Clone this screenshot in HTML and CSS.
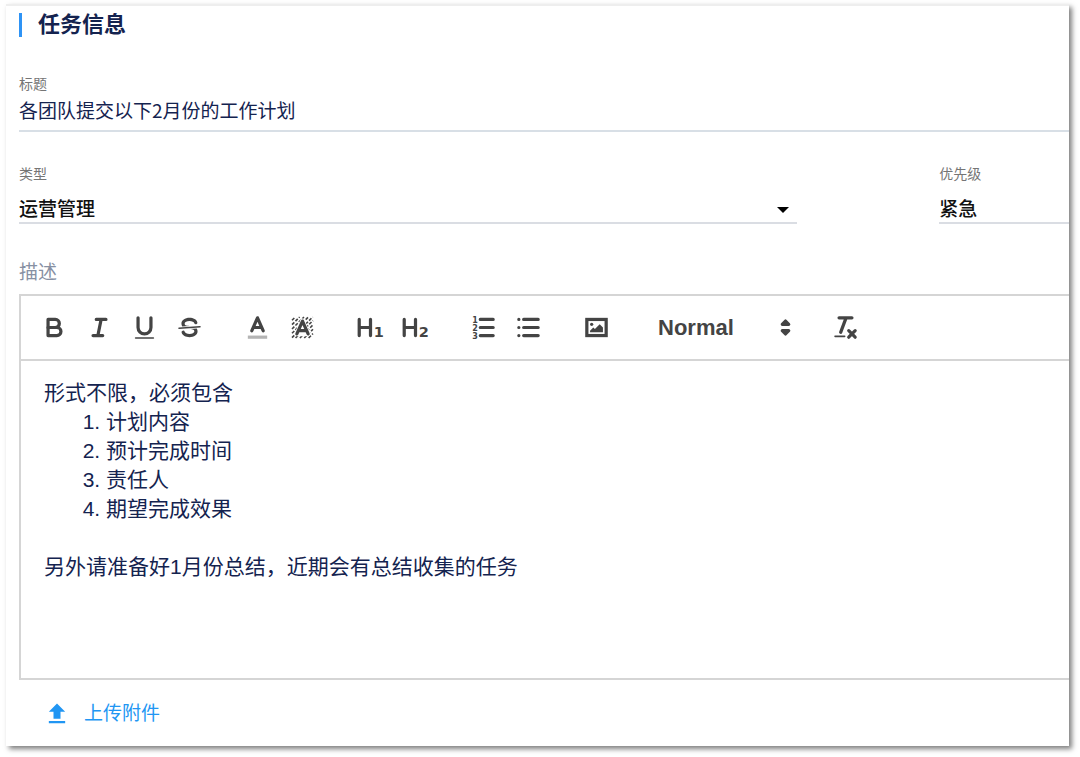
FILE: index.html
```html
<!DOCTYPE html>
<html lang="zh-CN">
<head>
<meta charset="utf-8">
<meta name="viewport" content="width=device-width, initial-scale=1">
<title>任务信息</title>
<link rel="stylesheet" href="styles.css">
</head>
<body>
<main class="card">
  <h2 class="card-title">任务信息</h2>

  <div class="field field-title">
    <label class="label" for="title">标题</label>
    <input class="text-input" id="title" type="text" value="各团队提交以下2月份的工作计划">
  </div>

  <div class="field-row">
    <div class="field">
      <label class="label" for="type">类型</label>
      <div class="select-wrap">
        <select class="select" id="type"><option>运营管理</option></select>
        <svg class="caret" viewBox="0 0 12 6" aria-hidden="true"><path d="M0 0h12L6 6z"/></svg>
      </div>
    </div>
    <div class="field">
      <label class="label" for="priority">优先级</label>
      <div class="select-wrap">
        <select class="select" id="priority"><option>紧急</option></select>
      </div>
    </div>
  </div>

  <h3 class="desc-label" id="desc-label">描述</h3>
  <section class="editor">
    <div class="toolbar" role="toolbar" aria-label="格式">
      <div class="group">
        <button class="tool" type="button" aria-label="粗体"><svg class="icon" viewBox="0 0 18 18"><path d="M5 4h4.500a2.500 2.500 0 0 1 0 5H5z"/><path d="M5 9h5.500a2.500 2.500 0 0 1 0 5H5z"/></svg></button>
        <button class="tool" type="button" aria-label="斜体"><svg class="icon" viewBox="0 0 18 18"><path d="M7 4h6M5 14h6M8 14l2-10"/></svg></button>
        <button class="tool" type="button" aria-label="下划线"><svg class="icon" viewBox="0 0 18 18"><path d="M5 3v6a4 4 0 0 0 8 0V3"/><rect class="solid" x="3" y="15" width="12" height="1" rx=".5"/></svg></button>
        <button class="tool" type="button" aria-label="删除线"><svg class="icon" viewBox="0 0 18 18"><path class="thin" d="M15.500 8.500l-13 1"/><path class="solid" d="M9.007 8C6.542 7.791 6 7.519 6 6.500 6 5.792 7.283 5 9 5c1.571 0 2.765.679 2.969 1.309a1 1 0 0 0 1.900-.617C13.356 4.106 11.354 3 9 3 6.200 3 4 4.538 4 6.500a3.200 3.200 0 0 0 .5 1.843zM8.984 10C11.457 10.208 12 10.479 12 11.500c0 .708-1.283 1.500-3 1.500-1.571 0-2.765-.679-2.969-1.309a1 1 0 1 0-1.900.617C4.644 13.894 6.646 15 9 15c2.800 0 5-1.538 5-3.500a3.200 3.200 0 0 0-.5-1.843z"/></svg></button>
      </div>
      <div class="group">
        <button class="tool" type="button" aria-label="文字颜色"><svg class="icon" viewBox="0 0 18 18"><path class="faded" d="M3 15h12"/><path d="M5.500 11L9 3l3.500 8M11.630 9H6.380"/></svg></button>
        <button class="tool" type="button" aria-label="背景颜色"><svg class="icon" viewBox="0 0 18 18"><path class="hatch" d="M2.500 4.500l2-2M2.500 7.200l4.700-4.700M2.500 9.900l7.400-7.400M2.500 12.600L12.600 2.500M2.500 15.300L15.300 2.500M4.700 15.500L15.500 4.700M7.400 15.500l8.100-8.100M10.100 15.500l5.400-5.400M12.800 15.500l2.700-2.700"/><path class="halo" d="M5.500 13L9 5l3.500 8z"/><path d="M5.500 13L9 5l3.500 8M11.630 11H6.380"/></svg></button>
      </div>
      <div class="group">
        <button class="tool" type="button" aria-label="一级标题"><svg class="icon" viewBox="0 0 18 18"><path d="M2 4v10M9 4v10M2 9h7"/><text class="digit" x="11" y="15">1</text></svg></button>
        <button class="tool" type="button" aria-label="二级标题"><svg class="icon" viewBox="0 0 18 18"><path d="M2 4v10M9 4v10M2 9h7"/><text class="digit" x="11" y="15">2</text></svg></button>
      </div>
      <div class="group">
        <button class="tool" type="button" aria-label="有序列表"><svg class="icon" viewBox="0 0 18 18"><path d="M7 4h8M7 9h8M7 14h8"/><text class="mini" x="2" y="6">1</text><text class="mini" x="2" y="11">2</text><text class="mini" x="2" y="16">3</text></svg></button>
        <button class="tool" type="button" aria-label="无序列表"><svg class="icon" viewBox="0 0 18 18"><path d="M6 4h9M6 9h9M6 14h9M3 4h.01M3 9h.01M3 14h.01"/></svg></button>
      </div>
      <div class="group">
        <button class="tool" type="button" aria-label="图片"><svg class="icon" viewBox="0 0 18 18"><rect x="3" y="4" width="12" height="10"/><circle class="solid" cx="6" cy="7" r="1"/><path class="solid" d="M5 12v-1l2-2 1 1 3-3 2 2v3z"/></svg></button>
      </div>
      <div class="group picker">
        <select class="picker-select" aria-label="字号"><option>Normal</option></select>
        <svg class="icon picker-icon" viewBox="0 0 18 18" aria-hidden="true"><path class="filled" d="M7 11l2 2 2-2zM7 7l2-2 2 2z"/></svg>
      </div>
      <div class="group">
        <button class="tool" type="button" aria-label="清除格式"><svg class="icon" viewBox="0 0 18 18"><path d="M5 3h8M6 12l3.350-9M11 11l4 4M15 11l-4 4"/><rect class="solid" x="2" y="14" width="7" height="1" rx=".5"/></svg></button>
      </div>
    </div>
    <div class="content" contenteditable="true" role="textbox" aria-multiline="true" aria-labelledby="desc-label" spellcheck="false">
      <p>形式不限，必须包含</p>
      <ol>
        <li>计划内容</li>
        <li>预计完成时间</li>
        <li>责任人</li>
        <li>期望完成效果</li>
      </ol>
      <p><br></p>
      <p>另外请准备好1月份总结，近期会有总结收集的任务</p>
    </div>
  </section>

  <button class="upload" type="button">
    <svg class="upload-icon" viewBox="0 0 24 24" aria-hidden="true"><path d="M9 16h6v-6h4l-7-7-7 7h4zM5 18h14v2H5z"/></svg>
    <span>上传附件</span>
  </button>
</main>
</body>
</html>
```
FILE: styles.css
```css
* {
  box-sizing: border-box;
}

body {
  margin: 0;
  padding: 4px 11px 11px 6px;
  background: #fff;
  color: #14234f;
  font-family: "Liberation Sans", "Noto Sans CJK SC", sans-serif;
}

h2, h3, p, ol {
  margin: 0;
}

button, input, select {
  margin: 0;
  padding: 0;
  border: 0;
  border-radius: 0;
  background: none;
  color: inherit;
  font: inherit;
  appearance: none;
}

.card {
  padding: 7px 0 18px 13px;
  border-top: 2px solid #eee;
  background: #fff;
  box-shadow: 3px 3px 5px rgba(0, 0, 0, 0.5);
}

.card-title {
  padding-left: 16px;
  border-left: 3px solid #2e93f5;
  font-size: 22px;
  line-height: 24px;
}

.field {
  display: flex;
  flex-direction: column;
}

.field-title {
  margin-top: 37px;
}

.label {
  color: #757575;
  font-size: 14px;
  line-height: 20px;
}

.text-input {
  width: 100%;
  height: 38px;
  padding-bottom: 5px;
  border-bottom: 2px solid #d8dfe6;
  font-family: "Noto Sans CJK SC", sans-serif;
  font-size: 19px;
}

.field-row {
  display: grid;
  grid-template-columns: 6fr 1fr;
  gap: 142px;
  margin-top: 32px;
}

.select-wrap {
  display: grid;
  align-items: center;
  border-bottom: 2px solid #dadde3;
}

.select {
  grid-area: 1 / 1;
  width: 100%;
  height: 38px;
  padding-top: 13px;
  color: #111;
  font-size: 19px;
  font-weight: 500;
}

.caret {
  grid-area: 1 / 1;
  justify-self: end;
  width: 12px;
  height: 6px;
  margin: 13px 8px 0 0;
  fill: #000;
  pointer-events: none;
}

.desc-label {
  margin: 35px 0 7px;
  color: #8790a3;
  font-size: 19px;
  font-weight: 400;
  line-height: 28px;
}

.editor {
  border: 2px solid #d5d5d5;
  border-right: 0;
}

.toolbar {
  display: flex;
  flex-wrap: wrap;
  gap: 23px;
  padding: 12px 11px;
  border-bottom: 2px solid #d5d5d5;
  color: #444;
}

.group {
  display: flex;
}

.tool {
  display: grid;
  place-items: center;
  width: 45px;
  height: 39px;
}

.icon {
  width: 29px;
  height: 29px;
  fill: none;
  stroke: currentColor;
  stroke-width: 2;
  stroke-linecap: round;
  stroke-linejoin: round;
}

.icon rect {
  stroke-linejoin: miter;
}

.icon .solid {
  fill: currentColor;
  stroke: none;
}

.icon .filled {
  fill: currentColor;
}

.icon .thin {
  stroke-width: 1;
}

.icon .faded {
  stroke-linecap: butt;
  opacity: 0.4;
}

.icon .hatch {
  stroke-width: 1;
  stroke-linecap: butt;
  stroke-dasharray: 2 1;
}

.icon .halo {
  fill: #fff;
  stroke: #fff;
  stroke-width: 3;
}

.icon .digit,
.icon .mini {
  fill: currentColor;
  stroke: none;
  font-family: "DejaVu Sans", sans-serif;
  font-weight: 700;
}

.icon .digit {
  font-size: 9px;
}

.icon .mini {
  font-size: 5px;
}

.picker {
  display: grid;
  align-items: center;
  width: 158px;
}

.picker-select {
  grid-area: 1 / 1;
  width: 100%;
  height: 39px;
  padding-left: 16px;
  font-size: 22px;
  font-weight: 700;
}

.picker-icon {
  grid-area: 1 / 1;
  justify-self: end;
  pointer-events: none;
}

.content {
  min-height: 317px;
  padding: 17px 23px;
  font-size: 21px;
  line-height: 29px;
  outline: none;
}

.content ol {
  padding-left: 62px;
}

.upload {
  display: flex;
  align-items: center;
  gap: 13px;
  margin: 19px 0 0 24px;
  color: #2196f3;
  font-size: 19px;
  line-height: 29px;
  cursor: pointer;
}

.upload-icon {
  width: 28px;
  height: 28px;
  fill: currentColor;
}
```
